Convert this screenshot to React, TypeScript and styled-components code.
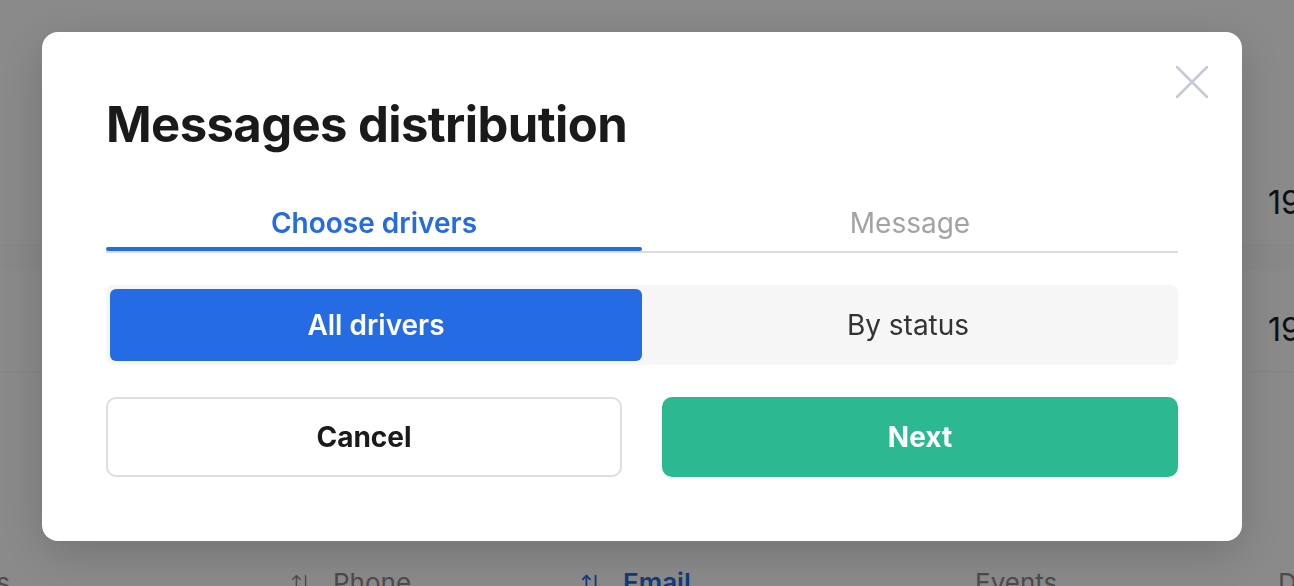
import React from "react";
import styled, { createGlobalStyle } from "styled-components";
import { ArrowUpDown } from "lucide-react";

const GlobalStyle = createGlobalStyle`
  html, body { margin: 0; padding: 0; }
  body {
    font-family: Inter, "Noto Sans", "Liberation Sans", sans-serif;
    background: #ffffff;
    overflow: hidden;
  }
  * { box-sizing: border-box; }
`;

const Page = styled.div`
  height: 586px;
  width: 1294px;
  overflow: hidden;
  background: #ffffff;
  padding-top: 160px;
`;

const DataRow = styled.div<{ $h: number; $top: number }>`
  height: ${(p) => p.$h}px;
  padding-top: ${(p) => p.$top}px;
  padding-left: 1268px;
  white-space: nowrap;
  font-size: 32px;
  line-height: 40px;
  color: #1c1c1c;
  border-bottom: 1px solid #f6f6f6;
`;

const Band = styled.div`
  height: 25px;
  background: #fcfcfc;
`;

const HeadRow = styled.div`
  margin-top: 195px;
  display: grid;
  grid-template-columns: 290px 290px 395px 303px 200px;
  font-size: 26px;
  line-height: 32px;
  color: #8c8c8c;
  white-space: nowrap;
`;

const HeadCell = styled.div<{ $end?: boolean; $active?: boolean }>`
  display: flex;
  align-items: center;
  gap: 21px;
  width: ${(p) => (p.$end ? "10px" : "auto")};
  justify-content: ${(p) => (p.$end ? "flex-end" : "flex-start")};
  color: ${(p) => (p.$active ? "#256be3" : "#8c8c8c")};
  font-weight: ${(p) => (p.$active ? 600 : 400)};
`;

const Overlay = styled.div`
  position: fixed;
  inset: 0;
  background: rgba(0, 0, 0, 0.46);
  display: flex;
  align-items: flex-start;
  padding: 32px 0 0 42px;
`;

const Modal = styled.div`
  position: relative;
  width: 1200px;
  height: 509px;
  background: #ffffff;
  border-radius: 16px;
  padding: 63px 64px 64px;
  box-shadow: 0 12px 48px rgba(0, 0, 0, 0.18);
  display: flex;
  flex-direction: column;
`;

const CloseButton = styled.button`
  position: absolute;
  top: 34px;
  right: 34px;
  width: 32px;
  height: 32px;
  padding: 0;
  border: 0;
  background: none;
  cursor: pointer;
  display: flex;
`;

const Title = styled.h2`
  margin: 0;
  font-size: 49px;
  line-height: 60px;
  font-weight: 700;
  color: #1a1a1a;
  letter-spacing: -0.6px;
`;

const Tabs = styled.div`
  margin-top: 51px;
  display: grid;
  grid-template-columns: 1fr 1fr;
  border-bottom: 2px solid #dcdcdc;
`;

const Tab = styled.button<{ $active?: boolean }>`
  position: relative;
  background: none;
  border: 0;
  padding: 0 0 11px;
  font-family: inherit;
  font-size: 28px;
  line-height: 34px;
  font-weight: ${(p) => (p.$active ? 600 : 400)};
  color: ${(p) => (p.$active ? "#256be3" : "#a3a3a3")};
  text-align: center;
  cursor: pointer;
  &::after {
    content: "";
    position: absolute;
    left: 0;
    right: 0;
    bottom: 0;
    height: 4px;
    border-radius: 2px;
    background: ${(p) => (p.$active ? "#256be3" : "transparent")};
  }
`;

const Segmented = styled.div`
  margin-top: 32px;
  display: grid;
  grid-template-columns: 1fr 1fr;
  padding: 4px;
  background: #f6f6f6;
  border-radius: 8px;
`;

const SegItem = styled.button<{ $active?: boolean }>`
  height: 72px;
  border: 0;
  border-radius: 6px;
  font-family: inherit;
  font-size: 28px;
  font-weight: ${(p) => (p.$active ? 600 : 400)};
  color: ${(p) => (p.$active ? "#ffffff" : "#333333")};
  background: ${(p) => (p.$active ? "#256be3" : "transparent")};
  cursor: pointer;
`;

const Actions = styled.div`
  margin-top: 32px;
  display: grid;
  grid-template-columns: 1fr 1fr;
  gap: 40px;
`;

const ActionButton = styled.button<{ $primary?: boolean }>`
  height: 80px;
  border-radius: 10px;
  font-family: inherit;
  font-size: 28px;
  font-weight: 700;
  cursor: pointer;
  border: ${(p) => (p.$primary ? "0" : "2px solid #dedede")};
  background: ${(p) => (p.$primary ? "#2cb891" : "#ffffff")};
  color: ${(p) => (p.$primary ? "#ffffff" : "#1a1a1a")};
`;

export default function App() {
  return (
    <>
      <GlobalStyle />
      <Page>
        <DataRow $h={85} $top={23}>19:42</DataRow>
        <Band />
        <DataRow $h={102} $top={40}>19:15</DataRow>
        <HeadRow>
          <HeadCell $end>Drivers</HeadCell>
          <HeadCell>
            <ArrowUpDown size={22} strokeWidth={1.6} />
            Phone
          </HeadCell>
          <HeadCell $active>
            <ArrowUpDown size={22} strokeWidth={2} />
            Email
          </HeadCell>
          <HeadCell>Events</HeadCell>
          <HeadCell>Date</HeadCell>
        </HeadRow>
      </Page>
      <Overlay>
        <Modal>
          <CloseButton aria-label="Close">
            <svg width="32" height="32" viewBox="0 0 32 32" fill="none">
              <path d="M1 1L31 31M31 1L1 31" stroke="#c5c9d6" strokeWidth="2.5" strokeLinecap="round" />
            </svg>
          </CloseButton>
          <Title>Messages distribution</Title>
          <Tabs>
            <Tab $active>Choose drivers</Tab>
            <Tab>Message</Tab>
          </Tabs>
          <Segmented>
            <SegItem $active>All drivers</SegItem>
            <SegItem>By status</SegItem>
          </Segmented>
          <Actions>
            <ActionButton>Cancel</ActionButton>
            <ActionButton $primary>Next</ActionButton>
          </Actions>
        </Modal>
      </Overlay>
    </>
  );
}
